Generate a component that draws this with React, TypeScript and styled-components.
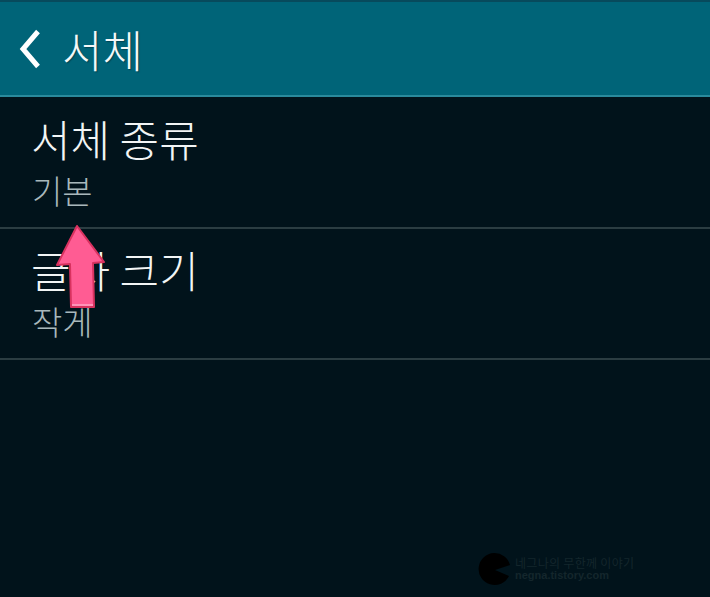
import React from "react"
import styled, { createGlobalStyle } from "styled-components"

const GlobalStyle = createGlobalStyle`
   html, body {
      margin: 0;
      padding: 0;
      background: #01131b;
   }
`

const settings = [
   { title: "서체 종류", value: "기본" },
   { title: "글자 크기", value: "작게" },
]

export default function App() {
   return (
      <>
         <GlobalStyle />
         <Screen>
            <Header>
               <svg width="24" height="40" viewBox="0 0 24 40">
                  <path d="M19 2.5 L4 20 L19 37.5" fill="none" stroke="#fff" strokeWidth="5" />
               </svg>
               <HeaderTitle>서체</HeaderTitle>
            </Header>
            <List>
               {settings.map((item) => (
                  <Row key={item.title}>
                     <RowTitle>{item.title}</RowTitle>
                     <RowValue>{item.value}</RowValue>
                  </Row>
               ))}
            </List>
            <Arrow width="54" height="88" viewBox="0 0 54 88">
               <path d="M23 2 L50 38 L39 39 L40 83 L17 83 L16 40 L3 41 Z" fill="#ff5c93" stroke="#d8325f" strokeWidth="2" strokeLinejoin="round" />
               <path d="M18 81 L39 81" fill="none" stroke="#ff93b8" strokeWidth="2" />
            </Arrow>
            <Watermark>
               <svg width="34" height="34" viewBox="0 0 34 34">
                  <path d="M17 1 A16 16 0 1 0 32 24 L18 18 L33 13 A16 16 0 0 0 17 1 Z" fill="#000" />
               </svg>
               <WatermarkText>
                  <span>네그나의 무한께 이야기</span>
                  <strong>negna.tistory.com</strong>
               </WatermarkText>
            </Watermark>
         </Screen>
      </>
   )
}

const Screen = styled.div`
   position: relative;
   width: 710px;
   height: 597px;
   overflow: hidden;
   background: #01131b;
   font-family: "Noto Sans CJK KR", "Noto Sans", sans-serif;
`

const Header = styled.header`
   box-sizing: border-box;
   height: 97px;
   padding: 0 0 0 19px;
   display: flex;
   align-items: center;
   gap: 19px;
   background: #006478;
   border-top: 2px solid #074a5c;
   border-bottom: 2px solid #2a8a9c;
`

const HeaderTitle = styled.h1`
   margin: 0;
   font-size: 44px;
   font-weight: 300;
   line-height: 1;
   color: #f4f8f8;
   text-shadow: 1px 1px 1px rgba(0, 40, 50, 0.5);
`

const List = styled.ul`
   margin: 0;
   padding: 1px 0 0;
   list-style: none;
`

const Row = styled.li`
   box-sizing: border-box;
   height: 131px;
   padding: 12px 0 0 31px;
   border-bottom: 2px solid #2b3d42;
`

const RowTitle = styled.div`
   font-size: 43px;
   font-weight: 300;
   line-height: 56px;
   color: #f2f5f5;
`

const RowValue = styled.div`
   font-size: 33px;
   font-weight: 300;
   line-height: 42px;
   margin: 3px 0 0 1px;
   color: #a8b8bb;
`

const Arrow = styled.svg`
   position: absolute;
   left: 54px;
   top: 224px;
`

const Watermark = styled.div`
   position: absolute;
   left: 477px;
   top: 552px;
   display: flex;
   align-items: center;
   gap: 4px;
`

const WatermarkText = styled.div`
   display: flex;
   flex-direction: column;
   font-size: 12px;
   line-height: 13px;
   color: #14262c;

   span {
      letter-spacing: 0.3px;
   }

   strong {
      font-family: "Liberation Sans", sans-serif;
      font-size: 11px;
      font-weight: 700;
   }
`
